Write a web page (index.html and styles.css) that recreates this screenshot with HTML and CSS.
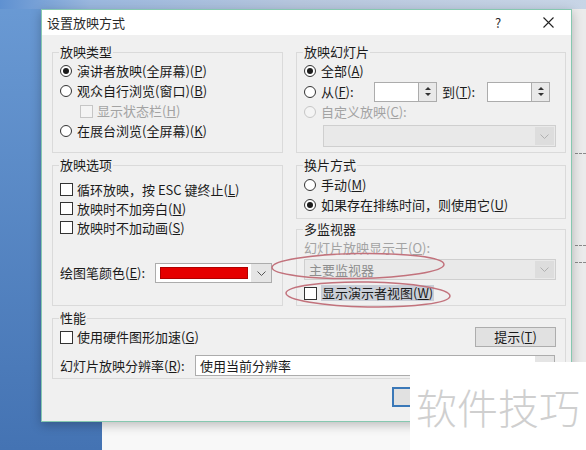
FILE: index.html
```html
<!DOCTYPE html>
<html lang="zh-CN">
<head>
  <meta charset="UTF-8" />
  <title>设置放映方式</title>
  <link rel="stylesheet" href="styles.css">
</head>
<body>

  <div class="slide-edge">
    <i class="dash d1"></i>
    <i class="dash d2"></i>
    <i class="dash d3"></i>
  </div>

  <div class="dialog">
    <div class="titlebar">
      <span class="title">设置放映方式</span>
      <span class="tb-btn tb-help">?</span>
      <span class="tb-btn">
        <svg width="11" height="11" viewBox="0 0 11 11"><path d="M0.5 0.5L10.5 10.5M10.5 0.5L0.5 10.5" stroke="#222" stroke-width="1.1" fill="none"/></svg>
      </span>
    </div>

    <div class="content">
      <div class="columns">
        <div class="col">
          <fieldset class="group g-type">
            <legend>放映类型</legend>
            <div class="row"><span class="radio on"></span>演讲者放映(全屏幕)(<u>P</u>)</div>
            <div class="row"><span class="radio"></span>观众自行浏览(窗口)(<u>B</u>)</div>
            <div class="row sub disabled"><span class="check"></span>显示状态栏(<u>H</u>)</div>
            <div class="row"><span class="radio"></span>在展台浏览(全屏幕)(<u>K</u>)</div>
          </fieldset>

          <fieldset class="group g-opts">
            <legend>放映选项</legend>
            <div class="row r19"><span class="check"></span>循环放映，按 ESC 键终止(<u>L</u>)</div>
            <div class="row r19"><span class="check"></span>放映时不加旁白(<u>N</u>)</div>
            <div class="row r19"><span class="check"></span>放映时不加动画(<u>S</u>)</div>
            <div class="row pen-row">
              <span class="pen-label">绘图笔颜色(<u>E</u>):</span>
              <div class="combo color-combo">
                <span class="swatch-wrap"><span class="swatch"></span></span>
                <span class="arrow">
                  <svg width="9" height="5" viewBox="0 0 9 5"><path d="M0.5 0.5L4.5 4.5L8.5 0.5" stroke="#555" fill="none"/></svg>
                </span>
              </div>
            </div>
          </fieldset>
        </div>

        <div class="col">
          <fieldset class="group g-slides">
            <legend>放映幻灯片</legend>
            <div class="row"><span class="radio on"></span>全部(<u>A</u>)</div>
            <div class="row r21">
              <span class="radio"></span>
              <span class="from-label">从(<u>F</u>):</span>
              <span class="spin"><span class="spin-box"></span><span class="spin-btns"><b class="up"></b><b class="down"></b></span></span>
              <span class="to-label">到(<u>T</u>):</span>
              <span class="spin"><span class="spin-box"></span><span class="spin-btns"><b class="up"></b><b class="down"></b></span></span>
            </div>
            <div class="row disabled"><span class="radio"></span>自定义放映(<u>C</u>):</div>
            <div class="combo off custom-combo">
              <span class="combo-text"></span>
              <span class="arrow">
                <svg width="9" height="5" viewBox="0 0 9 5"><path d="M0.5 0.5L4.5 4.5L8.5 0.5" stroke="#b0b0b0" fill="none"/></svg>
              </span>
            </div>
          </fieldset>

          <fieldset class="group g-advance">
            <legend>换片方式</legend>
            <div class="row"><span class="radio"></span>手动(<u>M</u>)</div>
            <div class="row"><span class="radio on"></span>如果存在排练时间，则使用它(<u>U</u>)</div>
          </fieldset>

          <fieldset class="group g-monitor">
            <legend>多监视器</legend>
            <div class="row disabled">幻灯片放映显示于(<u>O</u>):</div>
            <div class="combo off monitor-combo">
              <span class="combo-text">主要监视器</span>
              <span class="arrow">
                <svg width="9" height="5" viewBox="0 0 9 5"><path d="M0.5 0.5L4.5 4.5L8.5 0.5" stroke="#b0b0b0" fill="none"/></svg>
              </span>
            </div>
            <div class="row presenter-row"><span class="check"></span><span class="focus">显示演示者视图(<u>W</u>)</span></div>
          </fieldset>
        </div>
      </div>

      <fieldset class="group g-perf">
        <legend>性能</legend>
        <div class="row">
          <span class="check"></span>使用硬件图形加速(<u>G</u>)
          <button class="btn tip-btn">提示(<u>T</u>)</button>
        </div>
        <div class="row res-row">
          <span class="res-label">幻灯片放映分辨率(<u>R</u>):</span>
          <div class="combo res-combo">
            <span class="combo-text">使用当前分辨率</span>
            <span class="arrow">
              <svg width="9" height="5" viewBox="0 0 9 5"><path d="M0.5 0.5L4.5 4.5L8.5 0.5" stroke="#555" fill="none"/></svg>
            </span>
          </div>
        </div>
      </fieldset>

      <!-- OK / Cancel, hidden under the watermark in the shot -->
      <div class="actions">
        <button class="btn btn-default" aria-label="确定"></button>
        <button class="btn" aria-label="取消"></button>
      </div>
    </div>
  </div>

  <!-- hand-drawn marks over the screenshot -->
  <svg class="marks" width="586" height="450" viewBox="0 0 586 450">
    <ellipse cx="358" cy="266" rx="86" ry="12.5" transform="rotate(-1 358 266)" />
    <ellipse cx="368" cy="294.5" rx="82" ry="12.5" transform="rotate(1 368 294)" />
  </svg>

  <div class="watermark">软件技巧</div>

</body>
</html>
```

FILE: styles.css
```css
* {
  box-sizing: border-box;
}

body {
  margin: 0;
  width: 586px;
  height: 450px;
  overflow: hidden;
  position: relative;
  font-family: "Noto Sans CJK SC", "Microsoft YaHei", sans-serif;
  font-size: 13px;
  line-height: 18px;
  color: #1b1b1b;
  background:
    linear-gradient(to right, #5f91d1, #9ab7de 90px, #b6c6dd 300px, #c8d5e6) 0 0 / 100% 9px no-repeat,
    linear-gradient(#6a9ad4, #4473b3) 0 0 / 102px 100% no-repeat,
    linear-gradient(#f8f8f8, #f8f8f8) 0 422px / 100% 28px no-repeat,
    #ebebeb;
}

u {
  text-decoration: underline;
  text-underline-offset: 1px;
}

/* desktop behind the dialog */
.slide-edge {
  position: absolute;
  left: 574px;
  top: 0;
  width: 12px;
  height: 450px;
}

.dash {
  position: absolute;
  left: 1px;
  width: 11px;
  border-top: 1px dashed #8a8a8a;
}

.d1 { top: 153px; }
.d2 { top: 245px; }
.d3 { top: 262px; }

/* the dialog window */
.dialog {
  position: absolute;
  left: 41px;
  top: 9px;
  width: 531px;
  height: 413px;
  border: 1px solid #86c8b0;
  background: #f0f0f0;
  box-shadow: 0 3px 10px rgba(0, 0, 0, 0.25);
  display: flex;
  flex-direction: column;
}

.titlebar {
  height: 25px;
  background: #fff;
  display: flex;
  align-items: center;
  padding-left: 5px;
  color: #2a2a2a;
}

.title {
  flex: 1;
}

.tb-btn {
  width: 46px;
  height: 25px;
  display: flex;
  align-items: center;
  justify-content: center;
}

.tb-help {
  margin-right: 4px;
}

.content {
  padding: 8px 5px 0 10px;
}

.columns {
  display: grid;
  grid-template-columns: 231px 270px;
  column-gap: 13px;
}

.col {
  display: flex;
  flex-direction: column;
}

/* group boxes */
.group {
  margin: 0;
  padding: 0 7px;
  border: 1px solid #dadada;
  min-width: 0;
}

.group legend {
  padding: 0 1px;
  margin-left: -1px;
  line-height: 18px;
}

.g-type { padding-bottom: 11px; }
.g-opts { margin-top: 3px; padding-top: 6px; padding-bottom: 22px; }
.g-slides { padding-bottom: 5px; }
.g-advance { margin-top: 3px; padding-top: 1px; padding-bottom: 3px; }
.g-monitor { margin-top: 1px; padding-bottom: 3px; }
.g-perf { margin-top: 3px; padding-bottom: 2px; }

.row {
  display: flex;
  align-items: center;
  height: 20px;
  white-space: nowrap;
}

.r19 { height: 19px; }
.r21 { height: 21px; }
.sub { padding-left: 20px; }

.disabled {
  color: #a3a3a3;
}

/* radio buttons and check boxes */
.radio {
  width: 12px;
  height: 12px;
  border: 1px solid #333;
  border-radius: 50%;
  background: #fff;
  margin-right: 5px;
  display: flex;
  align-items: center;
  justify-content: center;
  flex-shrink: 0;
}

.radio.on::after {
  content: "";
  width: 6px;
  height: 6px;
  border-radius: 50%;
  background: #1b1b1b;
}

.check {
  width: 13px;
  height: 13px;
  border: 1px solid #333;
  background: #fff;
  margin-right: 4px;
  flex-shrink: 0;
}

.disabled .radio,
.disabled .check {
  border-color: #c6c6c6;
  background: #f4f4f4;
}

/* combo boxes */
.combo {
  display: flex;
  height: 21px;
  border: 1px solid #acacac;
  background: #fff;
}

.combo-text {
  flex: 1;
  padding-left: 4px;
  line-height: 19px;
}

.combo .arrow {
  width: 19px;
  display: flex;
  align-items: center;
  justify-content: center;
  background: #e5e5e5;
}

.combo.off {
  border-color: #cfcfcf;
  background: #e9e9e9;
  color: #8e8e8e;
}

.combo.off .arrow {
  background: #dddddd;
  margin: 1px;
}

.custom-combo {
  width: 233px;
  height: 22px;
  margin: 3px 0 0 19px;
}

.monitor-combo {
  width: 252px;
  margin-top: 1px;
}

.pen-row {
  margin-top: 26px;
}

.pen-label {
  width: 95px;
}

.color-combo {
  width: 117px;
  height: 20px;
}

.swatch-wrap {
  flex: 1;
  display: flex;
  align-items: center;
  padding: 0 3px 0 4px;
}

.swatch {
  width: 88px;
  height: 12px;
  background: #e50000;
  border: 1px solid #b00000;
}

.color-combo .arrow {
  width: 22px;
}

.presenter-row {
  height: 18px;
  margin-top: 4px;
}

.focus {
  background: #c9ced7;
  padding: 0 1px;
  line-height: 16px;
}

/* spin boxes */
.from-label {
  width: 53px;
}

.to-label {
  width: 50px;
  padding-left: 5px;
}

.spin {
  display: flex;
  height: 20px;
}

.spin-box {
  width: 45px;
  border: 1px solid #acacac;
  background: #fff;
}

.spin-btns {
  width: 18px;
  border: 1px solid #acacac;
  border-left: none;
  background: #e9e9e9;
  display: flex;
  flex-direction: column;
  align-items: center;
  justify-content: center;
  gap: 3px;
}

.spin-btns b {
  width: 0;
  height: 0;
  border-left: 3px solid transparent;
  border-right: 3px solid transparent;
}

.spin-btns .up { border-bottom: 3px solid #333; }
.spin-btns .down { border-top: 3px solid #333; }

/* buttons */
.btn {
  font: inherit;
  color: #1b1b1b;
  height: 20px;
  padding: 0;
  border: 1px solid #adadad;
  background: #e1e1e1;
  line-height: 18px;
}

.tip-btn {
  width: 81px;
  margin: 0 2px 0 auto;
}

.res-row {
  height: 21px;
  margin-top: 8px;
}

.res-label {
  width: 135px;
}

.res-combo {
  width: 360px;
}

.actions {
  display: flex;
  justify-content: flex-end;
  gap: 6px;
  margin-top: 8px;
  padding-right: 11px;
}

.actions .btn {
  width: 77px;
}

.actions .btn-default {
  width: 80px;
  border: 2px solid #3a78b8;
  line-height: 16px;
}

/* overlays */
.marks {
  position: absolute;
  left: 0;
  top: 0;
  pointer-events: none;
}

.marks ellipse {
  fill: none;
  stroke: #c2727c;
  stroke-width: 1.5;
}

.watermark {
  position: absolute;
  left: 410px;
  top: 362px;
  width: 176px;
  height: 88px;
  background: #fff;
  display: flex;
  align-items: center;
  justify-content: center;
  font-size: 41px;
  font-weight: 300;
  line-height: 1;
  color: #cfcfcf;
}
```
